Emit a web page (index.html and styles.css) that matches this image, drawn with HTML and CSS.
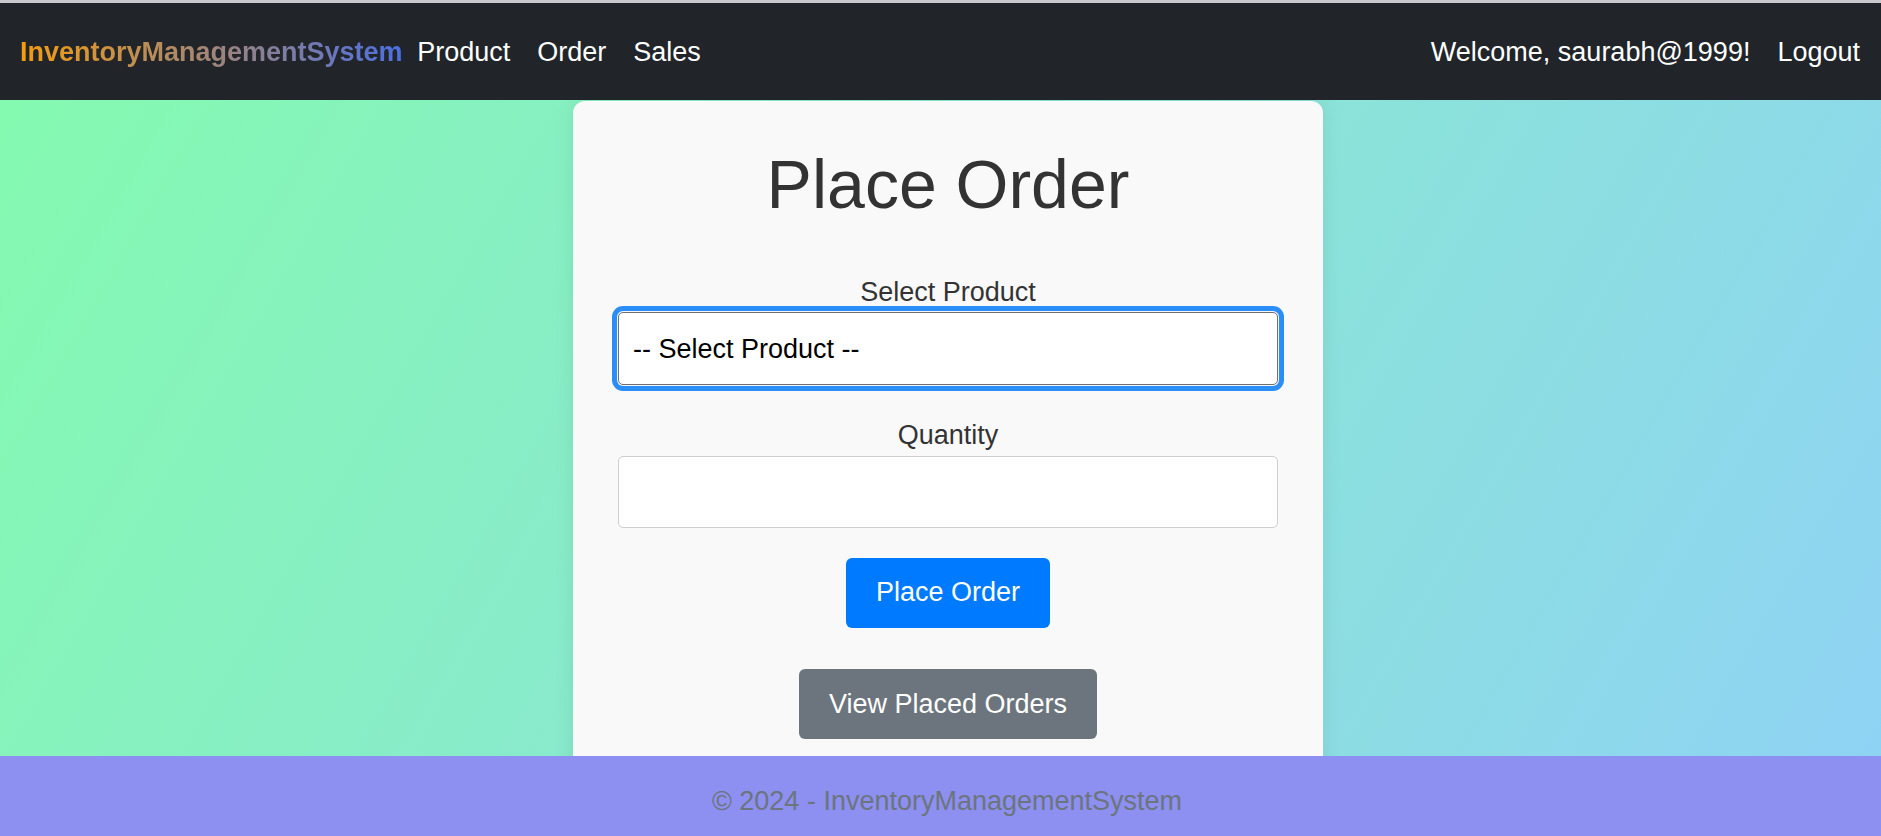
FILE: index.html
```html
<!DOCTYPE html>
<html lang="en">
<head>
<meta charset="utf-8">
<title>Place Order - InventoryManagementSystem</title>
<link rel="stylesheet" href="styles.css">
</head>
<body>
  <header class="navbar">
    <a class="brand" href="#">InventoryManagementSystem</a>
    <nav class="nav-left">
      <a class="nav-link" href="#">Product</a>
      <a class="nav-link" href="#">Order</a>
      <a class="nav-link" href="#">Sales</a>
    </nav>
    <div class="nav-right">
      <span class="nav-text">Welcome, saurabh@1999!</span>
      <a class="nav-link" href="#">Logout</a>
    </div>
  </header>

  <main class="main">
    <section class="card">
      <h1 class="title">Place Order</h1>
      <form class="order-form">
        <div class="form-group">
          <label class="form-label" for="product">Select Product</label>
          <select id="product" class="form-control select is-focused">
            <option>-- Select Product --</option>
          </select>
        </div>
        <div class="form-group">
          <label class="form-label" for="qty">Quantity</label>
          <input id="qty" class="form-control input" type="number">
        </div>
        <div class="actions">
          <button type="button" class="btn btn-primary">Place Order</button>
          <button type="button" class="btn btn-secondary">View Placed Orders</button>
        </div>
      </form>
    </section>
  </main>

  <footer class="footer">© 2024 - InventoryManagementSystem</footer>
</body>
</html>
```

FILE: styles.css
```css
* {
  box-sizing: border-box;
}

html, body {
  margin: 0;
  padding: 0;
}

body {
  height: 100vh;
  display: flex;
  flex-direction: column;
  font-family: "Liberation Sans", Arial, sans-serif;
  font-size: 27px;
  line-height: 1.5;
  color: #212529;
  overflow: hidden;
}

/* Navbar */
.navbar {
  flex: 0 0 100px;
  display: flex;
  align-items: center;
  background: #212529;
  border-top: 3px solid #c8c8cc;
  padding: 1px 7.5px 0 20px;
}

.brand {
  font-weight: bold;
  text-decoration: none;
  background: linear-gradient(90deg, #f59c0f 0%, #4b6fe3 100%);
  -webkit-background-clip: text;
  background-clip: text;
  color: transparent;
  margin-right: 1px;
}

.nav-left {
  display: flex;
}

.nav-right {
  margin-left: auto;
  display: flex;
  align-items: center;
}

.nav-link,
.nav-text {
  color: #fff;
  text-decoration: none;
  padding: 0 13.5px;
}

/* Main area */
.main {
  flex: 1 1 auto;
  min-height: 0;
  overflow: hidden;
  display: flex;
  justify-content: center;
  align-items: flex-start;
  padding-left: 15px;
  background: linear-gradient(120deg, #84fab0 0%, #8fd3f4 100%);
}

.card {
  width: 750px;
  margin-top: 1px;
  background: #f9f9f9;
  border-radius: 12px;
  box-shadow: 0 0 20px rgba(0, 0, 0, 0.08);
  padding: 43px 45px 43px;
  text-align: center;
}

.title {
  margin: 0 0 46px;
  font-size: 68px;
  font-weight: normal;
  line-height: 1.2;
  color: #333;
}

.form-group {
  margin-bottom: 30px;
}

.form-label {
  display: block;
  color: #333;
  line-height: 40.5px;
}

.form-control {
  display: block;
  width: 100%;
  font-family: inherit;
  font-size: 27px;
  background: #fff;
  color: #000;
  text-align: left;
}

.select {
  -webkit-appearance: none;
  appearance: none;
  height: 73px;
  padding: 0 14px;
  border: 1px solid #6f6f6f;
  border-radius: 5px;
}

.select.is-focused {
  outline: none;
  box-shadow: 0 0 0 1px #f4f6fa, 0 0 0 6px #2b8df8;
}

.input {
  height: 72px;
  padding: 0 14px;
  border: 1px solid #cfcfcf;
  border-radius: 5px;
  outline: none;
}

.actions {
  display: flex;
  flex-direction: column;
  align-items: center;
  gap: 41.5px;
}

.btn {
  font-family: inherit;
  font-size: 27px;
  line-height: 40.5px;
  height: 70px;
  padding: 0 30px;
  border: none;
  border-radius: 6px;
  color: #fff;
  cursor: pointer;
}

.btn-primary {
  background: #007bff;
}

.btn-secondary {
  background: #6c757d;
  height: 69.5px;
}

/* Footer */
.footer {
  flex: 0 0 80px;
  background: #8d8ff1;
  color: #6c757d;
  text-align: center;
  padding: 25px 0 0 13px;
  line-height: 40.5px;
}
```
